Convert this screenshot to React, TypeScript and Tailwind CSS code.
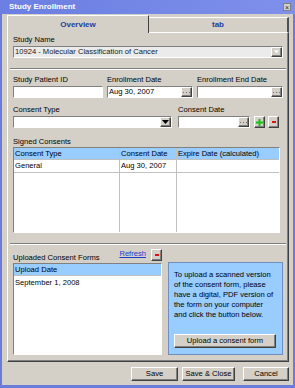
import React from "react";

const font = "font-['Liberation_Sans',Arial,sans-serif]";
const raised =
  "bg-[#d4d0c8] border border-t-white border-l-white border-r-[#404040] border-b-[#404040] shadow-[inset_-1px_-1px_0_#808080]";
const sunken = "border border-t-[#808080] border-l-[#808080] border-r-white border-b-white";

const Dots = () => (
  <div className={`${raised} w-[11px] h-full shrink-0 flex items-center justify-center`}>
    <svg width="7" height="3" viewBox="0 0 7 3">
      <rect x="0" y="1" width="1" height="1" fill="#707070" />
      <rect x="3" y="1" width="1" height="1" fill="#707070" />
      <rect x="6" y="1" width="1" height="1" fill="#707070" />
    </svg>
  </div>
);

const Label = ({ children }: { children: React.ReactNode }) => (
  <div className="h-[9px] leading-[9px] whitespace-nowrap">{children}</div>
);

const DateField = ({ value, width }: { value?: string; width: string }) => (
  <div className={`${sunken} bg-white h-[12px] flex ${width}`}>
    <div className="flex-1 pl-[1px] leading-[10px] whitespace-nowrap overflow-hidden">{value}</div>
    <Dots />
  </div>
);

const Arrow = ({ disabled }: { disabled?: boolean }) => (
  <div className={`${raised} w-[11px] h-full flex items-center justify-center`}>
    <svg width="7" height="4" viewBox="0 0 7 4">
      {disabled ? (
        <path d="M0 0h7L3.5 4z" fill="#ffffff" stroke="#b0b0b0" strokeWidth="0.5" />
      ) : (
        <path d="M0 0h7L3.5 4z" fill="#000" />
      )}
    </svg>
  </div>
);

const Separator = ({ className }: { className: string }) => (
  <div className={`${className} -mx-[3px] h-[2px] border-t border-t-[#808080] border-b border-b-white`} />
);

const Column = ({ title, value, width }: { title: string; value?: string; width: string }) => (
  <div className={`${width} flex flex-col border-r border-r-[#c0c0c0] last:border-r-0`}>
    <div className="h-[12px] bg-[#99ccff] border-b border-b-[#c0c0c0] pl-[1px] leading-[11px] whitespace-nowrap">{title}</div>
    <div className="h-[13px] border-b border-b-[#c0c0c0] pl-[1px] leading-[12px] whitespace-nowrap">{value}</div>
    <div className="flex-1" />
  </div>
);

export default function App() {
  return (
    <div className={`w-[295px] h-[388px] bg-[#6a7bdc] flex flex-col ${font} text-[7.6px] text-black leading-none`}>
      <div className="h-[14px] shrink-0 flex items-center justify-between pl-[9px] pr-[4px] bg-gradient-to-r from-[#6b7ee2] to-[#7e90ea]">
        <span className="text-white font-bold text-[8px]">Study Enrollment</span>
        <div className="w-[8px] h-[8px] bg-[#d4d0c8] border border-[#808080] flex items-center justify-center text-[7px] leading-none text-[#202020]">×</div>
      </div>

      <div className="flex-1 mx-[2px] mb-[3px] bg-[#d4d0c8] flex flex-col pl-[5px] pr-[4px] pt-[1px]">
        <div className="h-[18px] flex items-end -mb-[1px] relative z-10">
          <div className="w-[142px] h-[18px] bg-[#d4d0c8] border-t border-l border-t-white border-l-white border-r border-r-[#404040] flex items-center justify-center font-bold text-[8px] text-[#1d3c9e]">
            Overview
          </div>
          <div className="flex-1 h-[16px] bg-[#d4d0c8] border-t border-t-white border-r-2 border-r-[#505050] border-b border-b-white flex items-center justify-center font-bold text-[8px] text-[#1d3c9e]">
            tab
          </div>
        </div>

        <div className="h-[330px] shrink-0 border border-t-white border-l-white border-r-[#404040] border-b-[#404040] shadow-[inset_-1px_-1px_0_#808080] flex flex-col pl-[5px] pr-[5px]">
          <div className="mt-[2px]">
            <Label>Study Name</Label>
          </div>
          <div className={`${sunken} mt-[2px] h-[12px] bg-[#ebebeb] flex`}>
            <div className="flex-1 pl-[1px] leading-[10px] text-[#202020] whitespace-nowrap">10924 - Molecular Classification of Cancer</div>
            <Arrow disabled />
          </div>

          <Separator className="mt-[10px]" />

          <div className="mt-[5px] flex gap-[4px]">
            <div className="flex flex-col gap-[2px]">
              <Label>Study Patient ID</Label>
              <div className={`${sunken} bg-white h-[12px] w-[90px]`} />
            </div>
            <div className="flex flex-col gap-[2px]">
              <Label>Enrollment Date</Label>
              <DateField value="Aug 30, 2007" width="w-[86px]" />
            </div>
            <div className="flex flex-col gap-[2px]">
              <Label>Enrollment End Date</Label>
              <DateField width="w-[86px]" />
            </div>
          </div>

          <div className="mt-[7px] flex items-end">
            <div className="flex flex-col gap-[2px]">
              <Label>Consent Type</Label>
              <div className={`${sunken} bg-white h-[12px] w-[159px] flex`}>
                <div className="flex-1" />
                <Arrow />
              </div>
            </div>
            <div className="ml-[6px] flex flex-col gap-[2px]">
              <Label>Consent Date</Label>
              <DateField width="w-[72px]" />
            </div>
            <div className={`${raised} ml-[4px] w-[11px] h-[12px] flex items-center justify-center`}>
              <svg width="7" height="7" viewBox="0 0 7 7">
                <path d="M2.5 0h2v2.5H7v2H4.5V7h-2V4.5H0v-2h2.5z" fill="#19c019" />
              </svg>
            </div>
            <div className={`${raised} ml-[3px] w-[11px] h-[12px] flex items-center justify-center`}>
              <div className="w-[4px] h-[1.5px] bg-[#e01010]" />
            </div>
          </div>

          <div className="mt-[9px]">
            <Label>Signed Consents</Label>
          </div>
          <div className={`${sunken} mt-[1px] w-[267px] h-[86px] bg-white flex`}>
            <Column title="Consent Type" value="General" width="w-[106px]" />
            <Column title="Consent Date" value="Aug 30, 2007" width="w-[57px]" />
            <Column title="Expire Date (calculated)" width="flex-1" />
          </div>

          <Separator className="mt-[10px]" />

          <div className="mt-[4px] flex">
            <div className="w-[149px] shrink-0 flex flex-col">
              <div className="h-[12px] flex items-center">
                <div className="flex-1 self-end leading-[9px] h-[9px] -mb-[1px] whitespace-nowrap">Uploaded Consent Forms</div>
                <a className="text-[#1a3ccf] underline text-[7.6px] leading-none -mt-[3px] mr-[5px]">Refresh</a>
                <div className={`${raised} w-[11px] h-[12px] flex items-center justify-center`}>
                  <div className="w-[4px] h-[1.5px] bg-[#e01010]" />
                </div>
              </div>
              <div className={`${sunken} mt-[2px] h-[92px] bg-white flex flex-col`}>
                <div className="h-[12px] bg-[#99ccff] border-b border-b-[#c0c0c0] pl-[1px] leading-[11px]">Upload Date</div>
                <div className="h-[12px] pl-[1px] leading-[13px]">September 1, 2008</div>
              </div>
            </div>
            <div className="ml-[6px] mt-[13px] h-[93px] flex-1 bg-[#99ccff] border border-[#6f8fc0] flex flex-col pl-[5px]">
              <div className="pt-[7px] leading-[10px] whitespace-nowrap">
                To upload a scanned version
                <br />
                of the consent form, please
                <br />
                have a digital, PDF version of
                <br />
                the form on your computer
                <br />
                and click the button below.
              </div>
              <div className={`${raised} mt-[14px] w-[102px] h-[14px] flex items-center justify-center whitespace-nowrap`}>
                Upload a consent form
              </div>
            </div>
          </div>
        </div>

        <div className="mt-[5px] flex justify-end pr-[0px]">
          <div className={`${raised} w-[47px] h-[14px] flex items-center justify-center`}>Save</div>
          <div className={`${raised} ml-[4px] w-[53px] h-[14px] flex items-center justify-center`}>Save &amp; Close</div>
          <div className={`${raised} ml-[8px] w-[46px] h-[14px] flex items-center justify-center`}>Cancel</div>
        </div>
      </div>
    </div>
  );
}
